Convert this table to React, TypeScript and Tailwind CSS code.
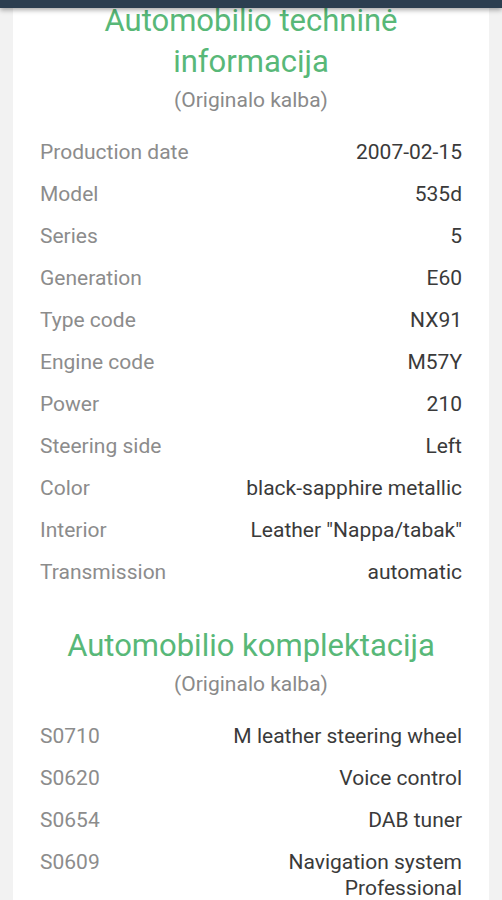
import React from 'react';

const techRows: [string, string][] = [
  ['Production date', '2007-02-15'],
  ['Model', '535d'],
  ['Series', '5'],
  ['Generation', 'E60'],
  ['Type code', 'NX91'],
  ['Engine code', 'M57Y'],
  ['Power', '210'],
  ['Steering side', 'Left'],
  ['Color', 'black-sapphire metallic'],
  ['Interior', 'Leather "Nappa/tabak"'],
  ['Transmission', 'automatic'],
];

const optionRows: [string, string][] = [
  ['S0710', 'M leather steering wheel'],
  ['S0620', 'Voice control'],
  ['S0654', 'DAB tuner'],
  ['S0609', 'Navigation system Professional'],
];

const SectionTitle: React.FC<{ title: React.ReactNode }> = ({ title }) => (
  <div className="text-center">
    <h2 className="text-[31px] leading-[41px] text-[#58b878] font-normal">{title}</h2>
    <div className="mt-[5px] text-[21px] leading-[26px] text-[#8a8a8a]">(Originalo kalba)</div>
  </div>
);

const InfoTable: React.FC<{ rows: [string, string][] }> = ({ rows }) => (
  <div className="mt-[18px]">
    {rows.map(([label, value]) => (
      <div key={label} className="flex justify-between gap-6 py-[8px] text-[21px] leading-[26px]">
        <span className="shrink-0 text-[#8c8c8c] whitespace-nowrap">{label}</span>
        <span className="text-[#3a3a3a] text-right max-w-[250px]">{value}</span>
      </div>
    ))}
  </div>
);

export default function App() {
  return (
    <div className="relative h-[900px] overflow-hidden bg-[#f2f2f2]" style={{ fontFamily: 'Roboto, "Liberation Sans", sans-serif' }}>
      <div className="absolute top-0 left-0 right-0 h-[8px] bg-[#2c3e50] shadow-[0_2px_5px_rgba(0,0,0,0.35)] z-10" />
      <div className="mx-[13px] bg-white px-[27px] pb-10">
        <SectionTitle title={<>Automobilio techninė<br />informacija</>} />
        <InfoTable rows={techRows} />
        <div className="mt-[32px]">
          <SectionTitle title="Automobilio komplektacija" />
          <InfoTable rows={optionRows} />
        </div>
      </div>
    </div>
  );
}
